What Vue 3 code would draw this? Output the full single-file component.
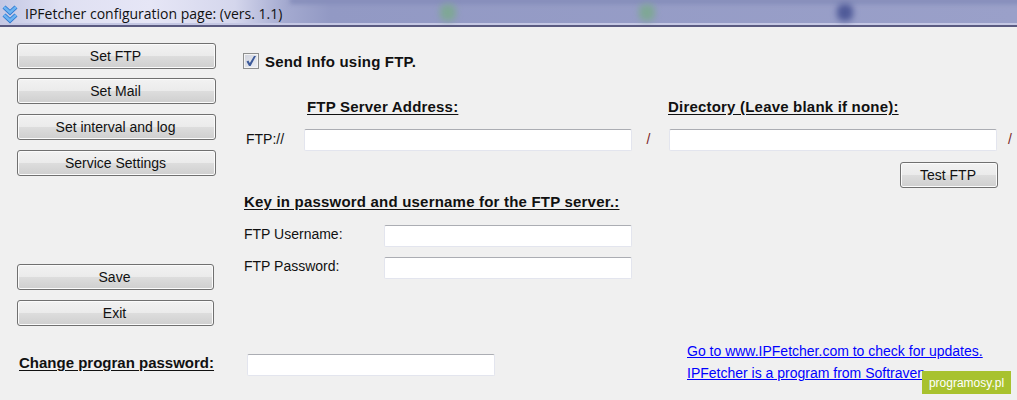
<script setup>
const sideTop = ['Set FTP', 'Set Mail', 'Set interval and log', 'Service Settings']
const sideBottom = ['Save', 'Exit']
</script>

<template>
  <div class="window">
    <header class="titlebar">
      <svg class="app-icon" width="18" height="20" viewBox="0 0 18 20">
        <path d="M3 3 L9 8.5 L15 3" fill="none" stroke="#2f78d0" stroke-width="4.4" />
        <path d="M3 3 L9 8.5 L15 3" fill="none" stroke="#6db4f2" stroke-width="2.4" />
        <path d="M3 11 L9 16.5 L15 11" fill="none" stroke="#2f78d0" stroke-width="4.4" />
        <path d="M3 11 L9 16.5 L15 11" fill="none" stroke="#6db4f2" stroke-width="2.4" />
      </svg>
      <span class="title">IPFetcher configuration page: (vers. 1.1)</span>
      <i class="blob green one"></i>
      <i class="blob green two"></i>
      <i class="blob navy"></i>
    </header>

    <div class="content">
      <nav class="side">
        <div class="side-group upper">
          <button v-for="b in sideTop" :key="b" class="btn">{{ b }}</button>
        </div>
        <div class="side-group lower">
          <button v-for="b in sideBottom" :key="b" class="btn">{{ b }}</button>
        </div>
      </nav>

      <main class="main">
        <div class="check-row">
          <span class="checkbox">
            <svg width="12" height="12" viewBox="0 0 12 12">
              <path d="M1.5 6.5 L4 11 L5.6 11 L11 1 L9 1 L4.8 8 L3.4 5.4 Z" fill="#3c5a9a" />
            </svg>
          </span>
          <span class="strong">Send Info using FTP.</span>
        </div>

        <div class="heads">
          <span class="strong u head-a">FTP Server Address:</span>
          <span class="strong u head-b">Directory (Leave blank if none):</span>
        </div>

        <div class="ftp-row">
          <span class="proto">FTP://</span>
          <input class="field wide" type="text" />
          <span class="slash">/</span>
          <input class="field wide" type="text" />
          <span class="slash last">/</span>
        </div>

        <div class="test-row">
          <button class="btn test">Test FTP</button>
        </div>

        <div class="strong u key-head">Key in password and username for the FTP server.:</div>

        <div class="cred-row">
          <label class="cred-label">FTP Username:</label>
          <input class="field cred" type="text" />
        </div>
        <div class="cred-row second">
          <label class="cred-label">FTP Password:</label>
          <input class="field cred" type="password" />
        </div>
      </main>
    </div>

    <footer class="footer">
      <span class="strong u change">Change progran password:</span>
      <input class="field cred" type="password" />
      <div class="links">
        <a href="#">Go to www.IPFetcher.com to check for updates.</a>
        <a href="#">IPFetcher is a program from Softraven.</a>
      </div>
    </footer>

    <div class="badge">programosy.pl</div>
  </div>
</template>

<style>
html, body { margin: 0; background: #f0f0f0; }
</style>

<style scoped>
.window {
  position: relative;
  width: 1017px;
  height: 400px;
  overflow: hidden;
  background: #f0f0f0;
  color: #111;
  font-family: "Liberation Sans", Arial, sans-serif;
  font-size: 14px;
}

.titlebar {
  position: relative;
  box-sizing: border-box;
  height: 27px;
  display: flex;
  align-items: center;
  overflow: hidden;
  background: linear-gradient(90deg, #c4c8e4 0, #dfe0f2 60px, #e6e6f6 150px, #d4d6ec 235px, #a4aad0 285px, #9299c4 330px, #9aa0c9 1017px);
  border-bottom: 2px solid #5a5a80;
  box-shadow: inset 0 -2px 0 #c5c8e4;
}
.titlebar::before {
  content: "";
  position: absolute;
  left: 290px;
  right: -10px;
  top: -2px;
  height: 6px;
  background: #858dba;
  filter: blur(2px);
}
.app-icon { position: relative; margin-left: 1px; margin-top: 3px; flex: none; }
.title {
  position: relative;
  margin-left: 6px;
  margin-top: 1px;
  font-family: "Open Sans", sans-serif;
  font-size: 14px;
  color: #111;
}
.blob {
  position: absolute;
  top: 4px;
  width: 16px;
  height: 17px;
  border-radius: 6px;
  filter: blur(3px);
}
.blob.green { background: #7fa796; }
.blob.one { left: 639px; }
.blob.two { left: 440px; }
.blob.navy { left: 837px; background: #4f5a98; }

.content {
  display: flex;
  padding: 16px 0 0 17px;
}
.side { width: 227px; flex: none; }
.side-group {
  display: flex;
  flex-direction: column;
  gap: 10px;
  width: 199px;
}
.upper .btn:first-child { margin-bottom: -1px; }
.side-group.lower { width: 197px; margin-top: 88px; }

.btn {
  box-sizing: border-box;
  height: 26px;
  padding: 0 2px 0 0;
  border: 1px solid #707070;
  border-radius: 3px;
  box-shadow: inset 0 0 0 1px #fbfbfb;
  background: linear-gradient(#f2f2f2 0, #ebebeb 48%, #dddddd 50%, #cfcfcf 100%);
  color: #111;
  font: inherit;
}

.main { flex: 1; min-width: 0; }
.strong { font-weight: 700; font-size: 15px; letter-spacing: 0.2px; }
.u { text-decoration: underline; text-underline-offset: 2px; }

.check-row {
  display: flex;
  align-items: center;
  height: 36px;
}
.checkbox {
  box-sizing: border-box;
  width: 16px;
  height: 16px;
  margin-left: -1px;
  display: flex;
  align-items: center;
  justify-content: center;
  border: 1px solid #8e8f8f;
  background: linear-gradient(135deg, #cfd2dc, #eef0f6);
  box-shadow: inset 0 0 0 1px #f4f4f4;
}
.check-row .strong { margin-left: 6px; }

.heads {
  display: flex;
  height: 20px;
  margin-top: 17px;
  align-items: center;
}
.head-a { margin-left: 63px; width: 361px; flex: none; }

.ftp-row {
  display: flex;
  align-items: center;
  margin-top: 13px;
}
.proto { width: 60px; flex: none; padding-left: 2px; box-sizing: border-box; margin-top: -2px; }
.field {
  box-sizing: border-box;
  height: 22px;
  padding: 0 3px;
  border: 1px solid #e3e5ee;
  border-top-color: #abadb3;
  border-radius: 2px;
  background: #fff;
  outline: none;
}
.wide { width: 328px; flex: none; }
.slash { width: 37px; flex: none; text-align: center; color: #7a1f1f; margin: -2px 2px 0 -2px; }
.slash.last { width: 30px; }

.test-row {
  display: flex;
  justify-content: flex-end;
  margin-top: 11px;
  padding-right: 19px;
}
.test { width: 98px; }

.key-head { margin-top: 6px; line-height: 16px; }

.cred-row {
  display: flex;
  align-items: center;
  margin-top: 15px;
}
.cred-row.second { margin-top: 10px; }
.cred-label { width: 140px; flex: none; margin-top: -4px; }
.cred { width: 248px; flex: none; }

.footer {
  display: flex;
  align-items: flex-start;
  margin-top: 17px;
  padding-left: 19px;
}
.footer .cred { margin-top: 11px; }
.change { width: 228px; flex: none; margin-top: 12px; line-height: 16px; letter-spacing: 0; }
.links {
  display: flex;
  flex-direction: column;
  gap: 6px;
  margin-left: 192px;
}
.links a { color: #0000ff; line-height: 16px; text-decoration: underline; }

.badge {
  position: absolute;
  left: 922px;
  top: 371px;
  width: 89px;
  height: 23px;
  display: flex;
  align-items: center;
  justify-content: center;
  background: #a8c22e;
  color: #fff;
  font-size: 12px;
}
</style>
